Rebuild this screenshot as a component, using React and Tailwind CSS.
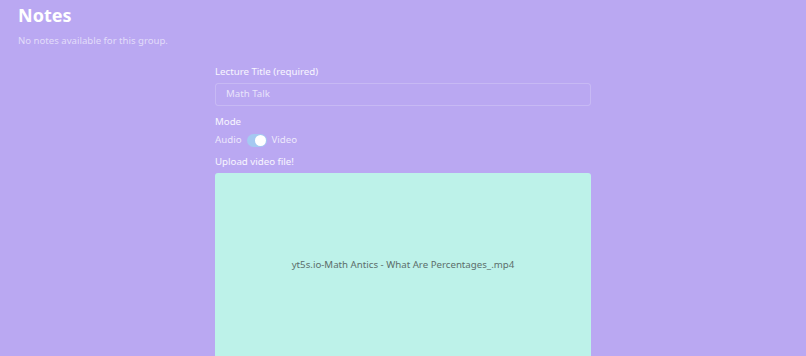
export default function App() {
  return (
    <div className="w-[806px] h-[356px] overflow-hidden bg-[#baa8f2] text-white" style={{ fontFamily: '"Noto Sans", "Open Sans", sans-serif' }}>
      <div className="px-[18px] pt-[3px]">
        <h1 className="text-[18px] font-bold leading-[24px]">Notes</h1>
        <p className="mt-[7px] text-[9.6px] leading-[14px] text-white/60">No notes available for this group.</p>
      </div>
      <div className="ml-[215px] w-[376px] mt-[17px]">
        <label className="block text-[9.7px] leading-[14px] text-white/90">Lecture Title (required)</label>
        <div className="mt-[4px] h-[23px] rounded-[3px] border border-white/20 flex items-center px-[10px] text-[9.7px] text-white/70">Math Talk</div>
        <div className="mt-[9px] text-[9.7px] leading-[14px] text-white/90">Mode</div>
        <div className="mt-[4px] flex items-center gap-[5px] text-[9.7px] leading-[14px] text-white/75">
          <span>Audio</span>
          <span className="relative inline-block w-[20px] h-[13px] rounded-full bg-[#a5c9f1]">
            <span className="absolute right-[1px] top-[1px] w-[11px] h-[11px] rounded-full bg-white"></span>
          </span>
          <span>Video</span>
        </div>
        <div className="mt-[8px] text-[9.7px] leading-[14px] text-white/90">Upload video file!</div>
        <div className="mt-[4px] h-[200px] rounded-[3px] bg-[#bdf2e9] flex items-start justify-center pt-[85px] text-[9.7px] text-[#5c6e6b]">
          yt5s.io-Math Antics - What Are Percentages_.mp4
        </div>
      </div>
    </div>
  );
}
